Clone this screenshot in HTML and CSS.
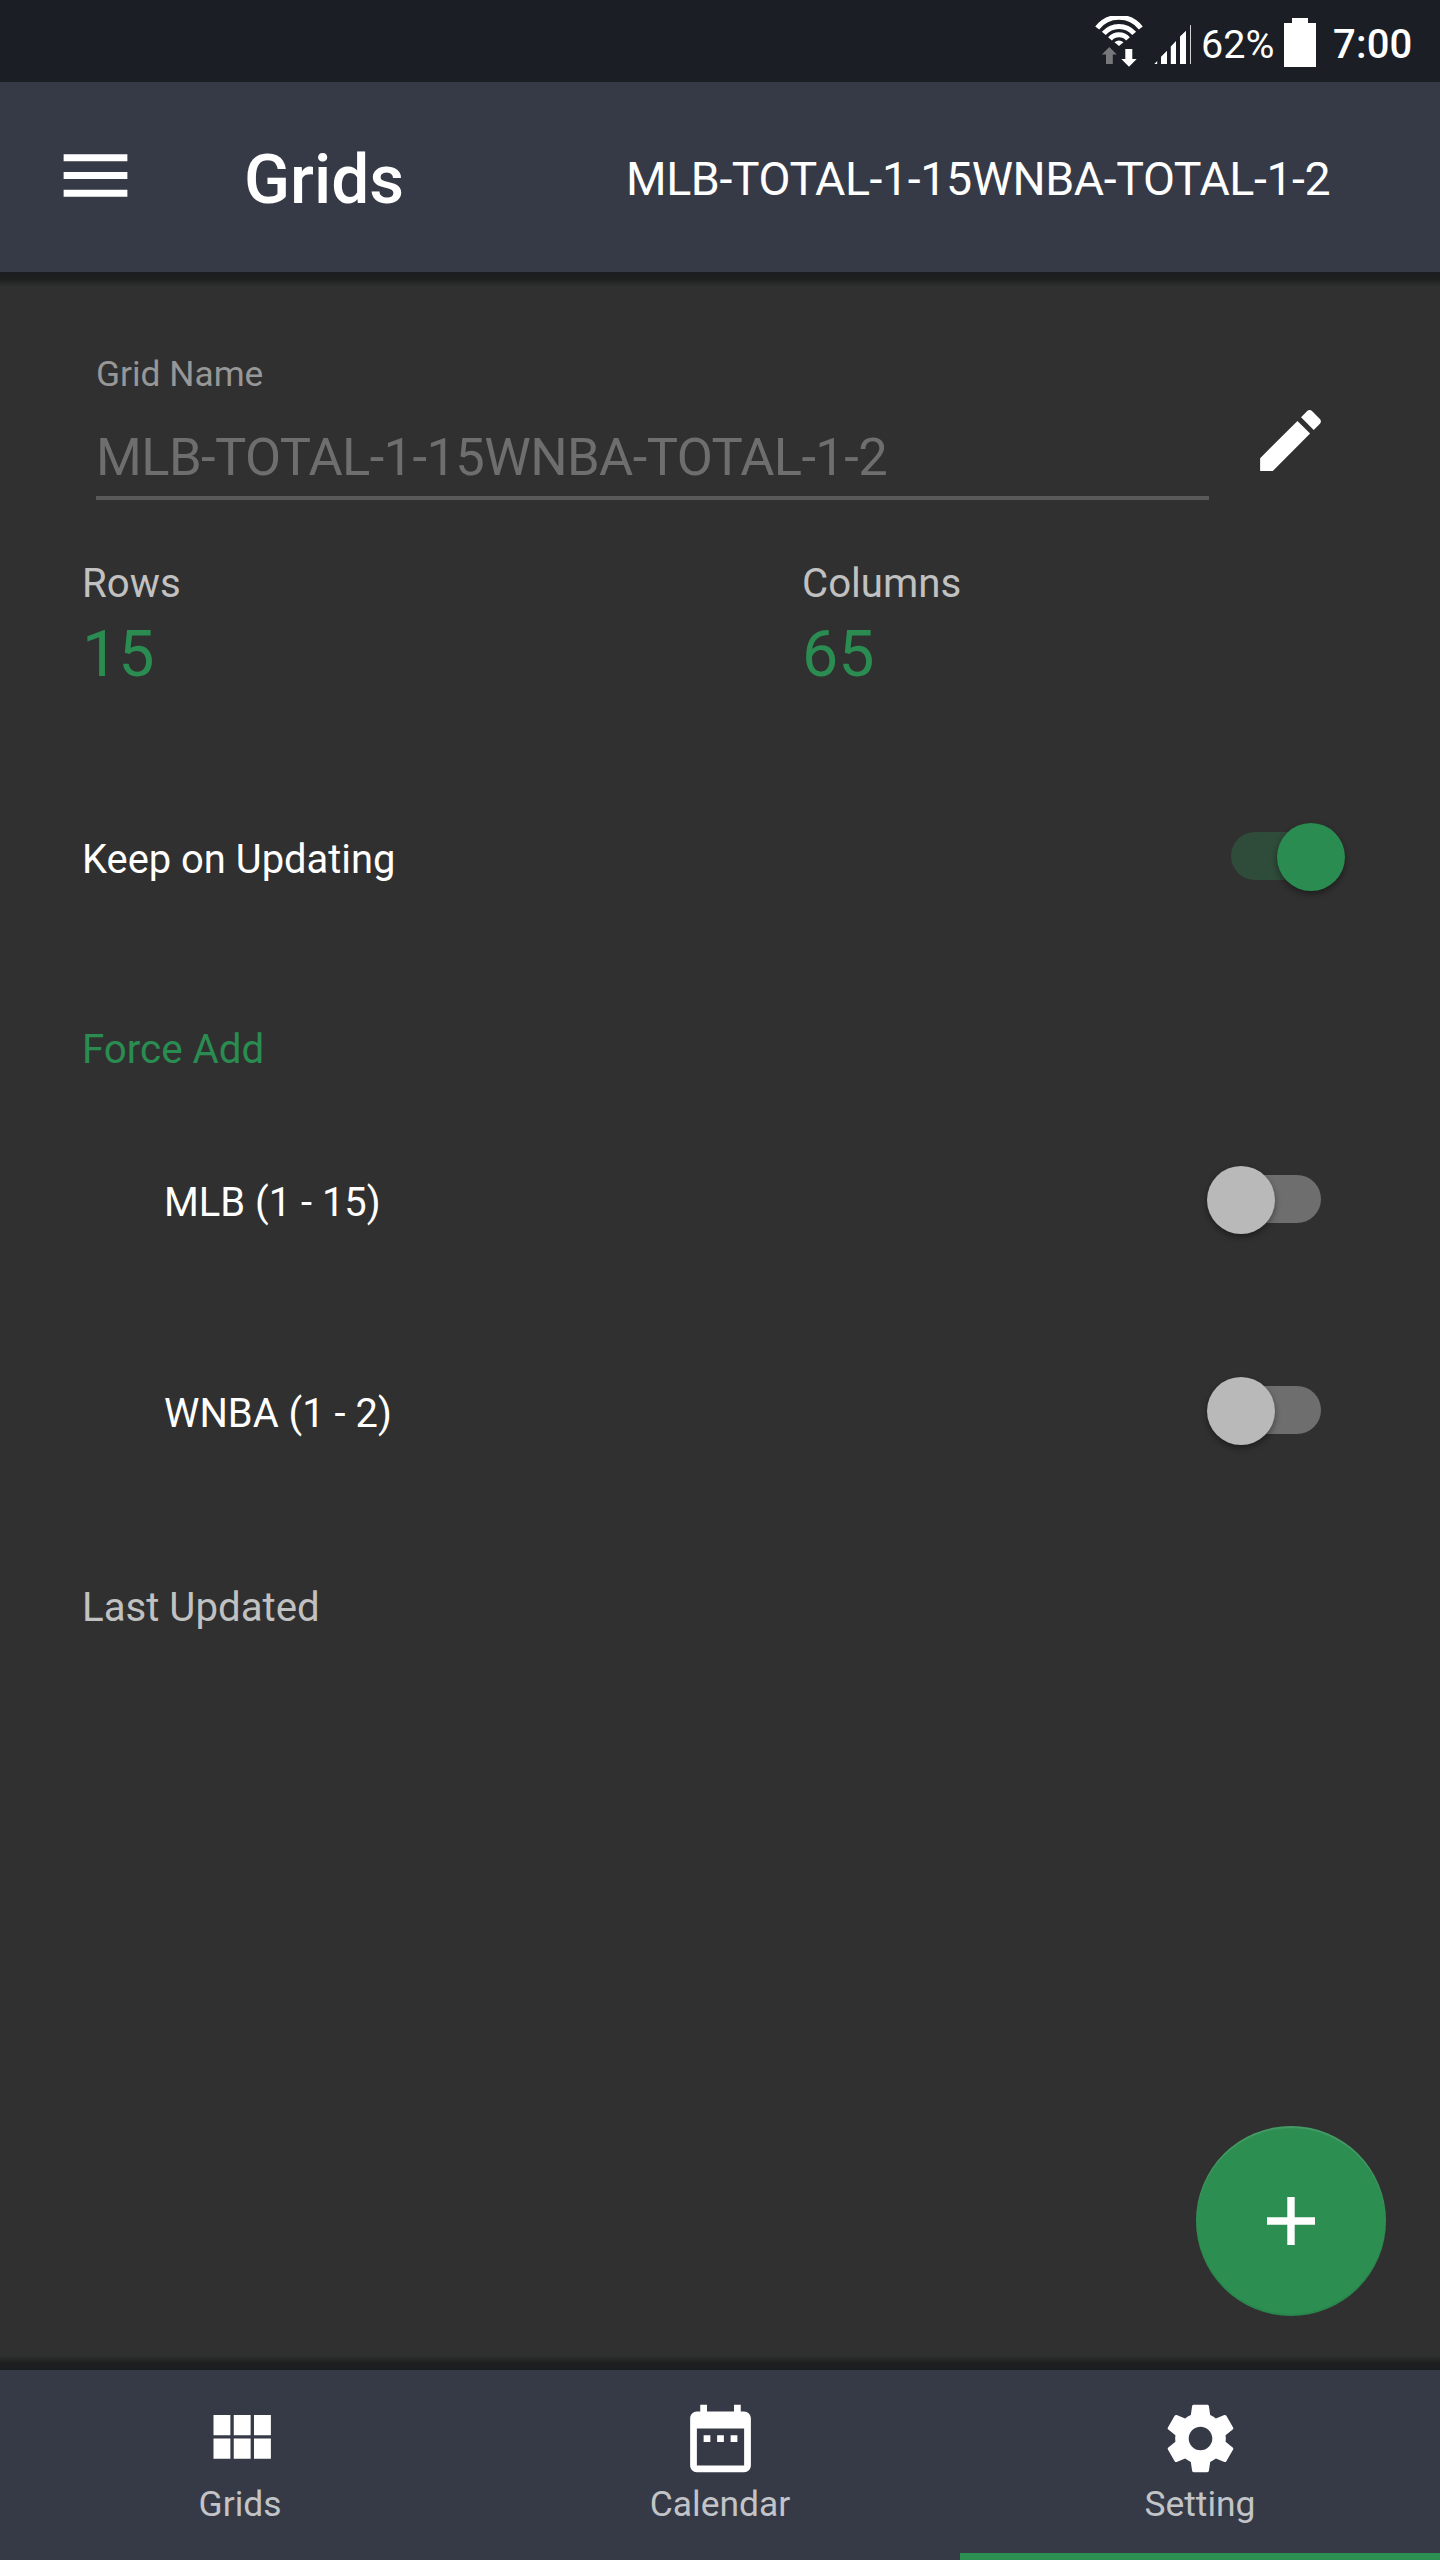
FILE: index.html
```html
<!DOCTYPE html>
<html lang="en">
<head>
<meta charset="utf-8">
<title>Grids</title>
<link rel="stylesheet" href="styles.css">
</head>
<body>
<div class="screen">
  <div class="status-bar">
    <svg class="wifi" viewBox="14 16 50 52">
      <g fill="none" stroke="#fff" stroke-width="5">
        <path d="M17.200 28A27.600 27.600 0 0 1 60.800 28"/>
        <path d="M23.800 33.400A20 20 0 0 1 54.200 33.400"/>
        <path d="M30 38.900A12 12 0 0 1 48 38.900"/>
      </g>
      <path fill="#fff" d="M39 46l-4.500-3.800q4.500-3.400 9 0z"/>
      <path fill="#77787c" d="M29.300 47l7.500 7.600h-4V64H26v-9.400h-4.200z"/>
      <path fill="#fff" d="M45.300 49h7v10h4.400L49 66.800 41.300 59h4z"/>
    </svg>
    <svg class="signal" viewBox="74 24 38 41">
      <path fill="#fff" d="M74.300 64l2.900-3v3zM81 64V56.800l6-6V64zM90.800 64V46.500l5.200-5.400V64zM100 64V36.600l6-5.800V64zM110.200 64V25.600l.8-.8V64z"/>
    </svg>
    <span class="battery-level">62%</span>
    <svg class="battery" viewBox="0 0 32 49"><path fill="#fff" d="M8 0h16v5h8v44H0V5h8z"/></svg>
    <span class="clock">7:00</span>
  </div>

  <header class="app-bar">
    <svg class="menu" viewBox="0 0 24 24"><path fill="#fff" d="M3 18h18v-2H3v2zm0-5h18v-2H3v2zm0-7v2h18V6H3z"/></svg>
    <h1 class="title">Grids</h1>
    <span class="grid-title">MLB-TOTAL-1-15WNBA-TOTAL-1-2</span>
  </header>

  <main class="content">
    <div class="name-row">
      <div class="field">
        <div class="field-label">Grid Name</div>
        <div class="field-value">MLB-TOTAL-1-15WNBA-TOTAL-1-2</div>
      </div>
      <svg class="edit" viewBox="0 0 24 24"><path fill="#fff" d="M3 17.250V21h3.750L17.810 9.940l-3.750-3.750L3 17.250zM20.710 7.040c.39-.39.39-1.020 0-1.410l-2.340-2.340c-.39-.39-1.020-.39-1.410 0l-1.830 1.830 3.750 3.750 1.830-1.830z"/></svg>
    </div>

    <div class="stats">
      <div class="stat"><div class="stat-label">Rows</div><div class="stat-value">15</div></div>
      <div class="stat"><div class="stat-label">Columns</div><div class="stat-value">65</div></div>
    </div>

    <div class="setting">
      <span class="setting-label">Keep on Updating</span>
      <div class="switch on"><div class="thumb"></div></div>
    </div>
    <div class="section">Force Add</div>
    <div class="setting nested">
      <span class="setting-label">MLB (1 - 15)</span>
      <div class="switch"><div class="thumb"></div></div>
    </div>
    <div class="setting nested">
      <span class="setting-label">WNBA (1 - 2)</span>
      <div class="switch"><div class="thumb"></div></div>
    </div>
    <div class="updated">Last Updated</div>
  </main>

  <div class="fab">
    <svg class="plus" viewBox="0 0 48 48"><path fill="#fff" d="M20.300 0h7.400v20.300H48v7.400H27.700V48h-7.400V27.700H0v-7.400h20.300z"/></svg>
  </div>

  <nav class="tabs">
    <div class="tab">
      <svg class="tab-icon" viewBox="0 0 24 24"><path fill="#fff" d="M4 11h5V5H4v6zm0 7h5v-6H4v6zm6 0h5v-6h-5v6zm6 0h5v-6h-5v6zm-6-7h5V5h-5v6zm6-6v6h5V5h-5z"/></svg>
      <span class="tab-label">Grids</span>
    </div>
    <div class="tab">
      <svg class="tab-icon" viewBox="0 0 24 24"><path fill="#fff" d="M9 11H7v2h2v-2zm4 0h-2v2h2v-2zm4 0h-2v2h2v-2zm2-7h-1V2h-2v2H8V2H6v2H5c-1.110 0-1.990.9-1.990 2L3 20c0 1.100.89 2 2 2h14c1.100 0 2-.9 2-2V6c0-1.100-.9-2-2-2zm0 16H5V9h14v11z"/></svg>
      <span class="tab-label">Calendar</span>
    </div>
    <div class="tab active">
      <svg class="tab-icon" viewBox="0 0 24 24"><path fill="#fff" d="M19.430 12.980c.04-.32.07-.64.07-.98s-.03-.66-.07-.98l2.110-1.650c.19-.15.24-.42.12-.64l-2-3.460c-.12-.22-.39-.3-.61-.22l-2.490 1c-.52-.4-1.080-.73-1.690-.98l-.38-2.650C14.460 2.180 14.250 2 14 2h-4c-.25 0-.46.18-.49.42l-.38 2.650c-.61.25-1.170.59-1.690.98l-2.490-1c-.23-.09-.49 0-.61.22l-2 3.460c-.13.22-.07.49.12.64l2.110 1.650c-.04.32-.07.65-.07.98s.03.66.07.98l-2.110 1.650c-.19.15-.24.42-.12.64l2 3.460c.12.22.39.3.61.22l2.490-1c.52.4 1.080.73 1.690.98l.38 2.650c.03.24.24.42.49.42h4c.25 0 .46-.18.49-.42l.38-2.650c.61-.25 1.170-.59 1.690-.98l2.490 1c.23.09.49 0 .61-.22l2-3.460c.12-.22.07-.49-.12-.64l-2.110-1.650zM12 15.500c-1.930 0-3.500-1.570-3.500-3.500s1.570-3.500 3.500-3.500 3.500 1.570 3.500 3.500-1.570 3.500-3.500 3.500z"/></svg>
      <span class="tab-label">Setting</span>
    </div>
  </nav>
</div>
</body>
</html>
```
FILE: styles.css
```css
* { box-sizing: border-box; }
body { margin: 0; background: #303030; }
svg { display: block; flex: none; }
.screen {
  position: relative;
  display: flex;
  flex-direction: column;
  width: 1440px;
  height: 2560px;
  overflow: hidden;
  background: #303030;
  color: #fff;
  font-family: Roboto, "Liberation Sans", sans-serif;
  white-space: nowrap;
}

.status-bar {
  display: flex;
  align-items: flex-start;
  justify-content: flex-end;
  height: 82px;
  padding-right: 27px;
  background: #1b1e25;
}
.wifi { width: 50px; height: 52px; margin: 16px 10px 0 0; }
.signal { width: 38px; height: 41px; margin-top: 24px; }
.battery-level { width: 92px; padding: 21px 0 0 9px; font-size: 39.5px; line-height: 48px; }
.battery { width: 32px; height: 49px; margin: 18px 0 0; }
.clock { width: 97px; padding: 21px 0 0 17px; font-size: 40px; font-weight: 500; line-height: 48px; letter-spacing: .2px; }

.app-bar {
  display: flex;
  align-items: flex-start;
  height: 190px;
  padding-left: 52.5px;
  background: #363a46;
}
.menu { width: 85px; height: 85px; margin-top: 50.5px; }
.title { width: 382px; margin: 58px 0 0 106.5px; font-size: 67.6px; font-weight: 500; line-height: 80px; }
.grid-title { margin-top: 69px; font-size: 46.5px; line-height: 56px; letter-spacing: -.41px; }

.content {
  flex: 1;
  padding: 81px 95px 0 82px;
  background:
    linear-gradient(to bottom, #1a1d20, #1d1f1f 45%, #303030) top / 100% 15px no-repeat,
    linear-gradient(to top, #1a1d20, #1d1f1f 45%, #303030) bottom / 100% 15px no-repeat,
    #303030;
}
.name-row { display: flex; padding-left: 14px; }
.field { width: 1113px; border-bottom: 4px solid #595959; }
.field-label { color: #979797; font-size: 35.3px; line-height: 42px; }
.field-value { margin-top: 31px; padding-bottom: 8px; color: #6e6e6e; font-size: 52.5px; line-height: 62px; letter-spacing: -.61px; }
.edit { width: 81px; height: 81px; margin: 47px 0 0 41px; }

.stats { display: flex; margin-top: 60px; }
.stat { width: 720px; flex: none; }
.stat-label { color: #c1c1c1; font-size: 40.2px; line-height: 48px; }
.stat-value { margin-top: 8px; color: #2a8c50; font-size: 64.5px; line-height: 76px; }

.setting { display: flex; align-items: center; justify-content: space-between; height: 68px; margin-top: 131px; }
.setting-label { padding-top: 6px; font-size: 39.9px; line-height: 48px; }
.section { margin-top: 135px; color: #2a8c50; font-size: 40.3px; line-height: 48px; }
.nested { margin-top: 92px; padding-left: 82px; }
.nested + .nested { margin-top: 143px; }
.updated { margin-top: 139px; color: #c1c1c1; font-size: 40.2px; line-height: 48px; }

.switch {
  display: flex;
  align-items: center;
  width: 138px;
  height: 68px;
}
.switch::before {
  content: "";
  width: 90px;
  height: 48px;
  margin: -2px 0 0 24px;
  border-radius: 24px;
  background: #6e6e6e;
}
.thumb {
  z-index: 1;
  width: 68px;
  height: 68px;
  margin-left: -114px;
  border-radius: 50%;
  background: #b9b9b9;
  box-shadow: 0 3px 6px rgba(0, 0, 0, .4);
}
.switch.on::before { background: #2f4b3a; }
.switch.on .thumb { margin-left: -44px; background: #2a8c50; }

.fab {
  position: absolute;
  right: 54px;
  bottom: 244px;
  display: flex;
  align-items: center;
  justify-content: center;
  width: 190px;
  height: 190px;
  border-radius: 50%;
  background: #2c8e51;
  box-shadow: inset 0 2px 1px rgba(255, 255, 255, .12), inset 0 -2px 1px rgba(0, 0, 0, .06);
}
.plus { width: 48px; height: 48px; }

.tabs { display: flex; height: 190px; background: #363a46; }
.tab {
  display: flex;
  flex: 1;
  flex-direction: column;
  align-items: center;
  padding-top: 28px;
}
.tab-icon { width: 81px; height: 81px; }
.tab-label { margin-top: 4px; color: #c2c4c7; font-size: 35.4px; line-height: 42px; }
.active { border-bottom: 7px solid #2c8e51; }
```
